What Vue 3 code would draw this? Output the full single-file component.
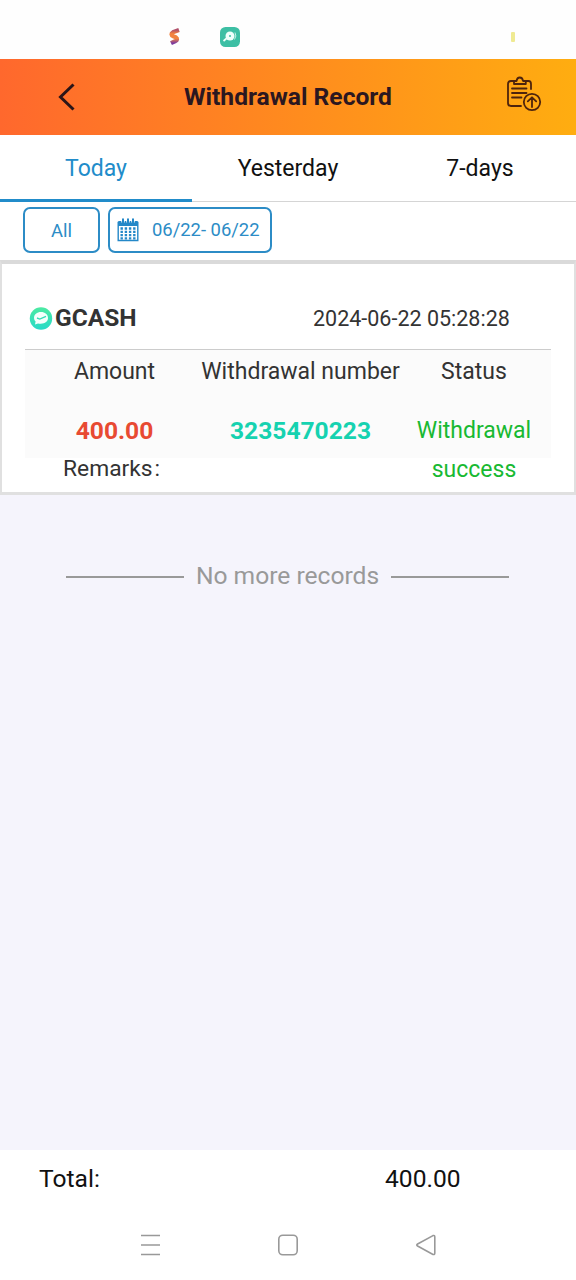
<script setup>
const tabs = ['Today', 'Yesterday', '7-days']
const gridRows = [0, 1, 2, 3]
</script>

<template>
  <main class="screen">
    <div class="statusbar">
      <svg width="576" height="58" viewBox="0 0 576 58">
        <defs>
          <linearGradient id="swirl" x1="0" y1="0" x2="0" y2="1">
            <stop offset="0" stop-color="#b0506a" /><stop offset=".28" stop-color="#f4823d" />
            <stop offset=".65" stop-color="#f0823f" /><stop offset="1" stop-color="#7c3aa0" />
          </linearGradient>
        </defs>
        <path d="M179 30L173 32.200C170.800 33.500 171 35.500 173.200 36.200L176 37.400C177.600 38.500 177.300 40.300 175.500 41L171 43.200" fill="none" stroke="url(#swirl)" stroke-width="4.200" />
        <rect x="220" y="27" width="20" height="20" rx="5.500" fill="#3dbfa4" />
        <circle cx="230" cy="36" r="4.500" fill="#effffb" />
        <path d="M227 38L223.500 41" stroke="#effffb" stroke-width="1.700" fill="none" />
        <path d="M234.500 39.500Q237 36 235 32.500" stroke="#c5f0e6" stroke-width="1" fill="none" />
        <circle cx="230" cy="36" r="1" fill="#3dbfa4" />
        <rect x="511" y="32" width="4" height="10" rx="1" fill="#efea92" />
      </svg>
    </div>
    <header class="header">
      <svg class="back" width="20" height="30" viewBox="0 0 20 30"><path d="M17.500 2.500L4.500 15L17.500 27.500" /></svg>
      <h1>Withdrawal Record</h1>
      <svg class="clip" width="36" height="36" viewBox="0 0 36 36">
        <path d="M8 5H5Q2 5 2 8V27Q2 30 5 30H15M20 5H22.500Q25 5 25 8V13" />
        <path d="M8 8V5H10.500Q11 1.500 13.800 1.500T17 5H19.800V8Z" />
        <path d="M6 12.500H20.500M6 17H20.500M6 21.500H15.500" />
        <circle cx="26" cy="26" r="8.200" />
        <path d="M26 31V21.500M21.800 25.400L26 21.300L30.200 25.400" />
      </svg>
    </header>
    <nav class="tabs">
      <div v-for="(tab, i) in tabs" :key="tab" class="tab" :class="{ active: i === 0 }"><span>{{ tab }}</span></div>
    </nav>
    <div class="filters">
      <button class="all"><span>All</span></button>
      <button class="date">
        <svg width="22" height="24" viewBox="0 0 22 24">
          <path d="M.5 4.500Q.5 3 2 3H20Q21.500 3 21.500 4.500V8H.5Z" fill="#2488c8" />
          <path d="M1.200 8V22.500H20.800V8" fill="none" stroke="#2488c8" stroke-width="1.400" />
          <path d="M6 4.500V2M11 4.500V2M16 4.500V2" stroke="#fff" stroke-width="3.400" />
          <path d="M6 4.500V1.200M11 4.500V1.200M16 4.500V1.200" stroke="#2488c8" stroke-width="2" stroke-linecap="round" />
          <path v-for="r in gridRows" :key="r" :d="`M3.500 ${10.500 + r * 3.300}H18.500`" stroke="#2488c8" stroke-width="2.300" stroke-dasharray="2.400 1.800" />
        </svg>
        <span>06/22- 06/22</span>
      </button>
    </div>
    <article class="card">
      <div class="cardhead">
        <svg width="24" height="24" viewBox="0 0 24 24">
          <defs><linearGradient id="mint" x1="0" y1="0" x2="0" y2="1"><stop stop-color="#4ceaa2" /><stop offset="1" stop-color="#27dac8" /></linearGradient></defs>
          <circle cx="12" cy="12.500" r="11.200" fill="url(#mint)" />
          <path d="M12 6C8 6 5 8.500 5 12Q5 14 6.600 15.500L6 18.500L9 17.400C15 18.500 19 16 19 12C19 8.500 16 6 12 6Z" fill="#f4fffc" />
          <path d="M8 12L10.800 13.100L17 10.300" fill="none" stroke="#35dcb6" stroke-width="1.400" />
        </svg>
        <strong>GCASH</strong>
        <time>2024-06-22 05:28:28</time>
      </div>
      <div class="grid">
        <span class="label">Amount</span><span class="label">Withdrawal number</span><span class="label">Status</span>
        <b class="amount">400.00</b><b class="number">3235470223</b>
        <div class="status"><span>Withdrawal</span><span>success</span></div>
      </div>
      <div class="remarks"><span>Remarks</span><i>:</i></div>
    </article>
    <div class="end"><hr><span>No more records</span><hr></div>
    <footer class="total"><span class="tl">Total:</span><span>400.00</span></footer>
    <div class="navbar">
      <svg width="22" height="22" viewBox="0 0 22 22"><path d="M1 1.500H20M1 11H20M1 20.500H20" /></svg>
      <svg width="22" height="22" viewBox="0 0 22 22"><rect x="1.800" y="1.200" width="18.400" height="19.600" rx="4" /></svg>
      <svg width="22" height="22" viewBox="0 0 22 22"><path d="M18 1.600L2.600 10Q1 11 2.600 12L18 20.400Q19.800 21 19.800 19V3Q19.800 1 18 1.600Z" /></svg>
    </div>
  </main>
</template>

<style>
body { margin: 0; }
</style>
<style scoped>
* { box-sizing: border-box; }
.screen { width: 576px; height: 1280px; display: flex; flex-direction: column; background: #f5f4fc; font-family: Roboto, sans-serif; color: #333; overflow: hidden; white-space: nowrap; }
svg { display: block; flex: none; fill: none; }
.statusbar { height: 59px; background: #fefefe; }
.header { height: 76px; display: grid; grid-template-columns: 96px 1fr 96px; align-items: center; background: linear-gradient(90deg, #ff682d, #ffad10); color: #2b1720; }
.back { margin-left: 56px; margin-top: -1px; stroke: #2b1518; stroke-width: 3; }
.clip { margin-left: 26px; margin-top: -6px; stroke: #4e240d; stroke-width: 1.8; stroke-linecap: round; stroke-linejoin: round; }
h1 { margin: 0; text-align: center; font-size: 24.6px; font-weight: 700; line-height: 30px; }
.tabs { height: 67px; display: grid; grid-template-columns: repeat(3, 1fr); background: #fff; }
.tab { display: flex; align-items: center; justify-content: center; border-bottom: 1px solid #d5d5d5; font-size: 23px; color: #111; padding-top: 1px; }
.tab.active { color: #218cca; border-bottom: 3px solid #218cca; padding-top: 3px; }
.filters { height: 58px; display: flex; gap: 8px; padding: 5px 23px; background: #fff; }
button { height: 46px; border: 2px solid #2c8cc6; border-radius: 7px; background: #fff; color: #2c8cc6; font: 18.4px Roboto, sans-serif; display: flex; align-items: center; padding: 0; }
.all { width: 77px; justify-content: center; }
.all span { padding-top: 1px; }
.date { width: 164px; padding-left: 7px; gap: 13px; }
.date span { margin-top: -2px; }
.card { height: 235px; background: #fff; border: solid #e0e0e0; border-width: 4px 2px 3px; border-top-color: #dadada; padding: 1px 23px 0; }
.cardhead { height: 85px; border-bottom: 1px solid #ccc; display: flex; align-items: center; padding: 21px 0 0 4px; }
.cardhead strong { font-size: 24.5px; margin-left: 2px; width: 258px; }
.cardhead time { font-size: 21.5px; padding-top: 1px; }
.grid { height: 108px; background: #fbfbfb; display: grid; grid-template-columns: 179px 193px 154px; grid-template-rows: 42px 39px; row-gap: 19px; justify-items: center; align-items: center; }
.label { font-size: 23px; }
b { font-size: 24.6px; }
.amount { color: #e84a32; }
.number { color: #16d2b0; }
.status { height: 39px; display: flex; flex-direction: column; align-items: center; font-size: 23px; line-height: 39px; color: #18b932; }
.remarks { height: 24px; display: flex; font-size: 22.8px; line-height: 22px; padding-left: 38px; }
.remarks i { font-style: normal; margin-left: 2px; }
.end { margin-top: 64px; height: 34px; display: flex; align-items: center; padding: 0 67px 0 66px; gap: 11.5px; color: #999; font-size: 24.6px; }
.end span { margin-top: -2px; }
hr { flex: 1; border: 0; margin: 2px 0 0; height: 2px; background: #999; }
.total { margin-top: auto; height: 58px; background: #fff; display: flex; align-items: center; padding: 0 0 2px 39px; color: #111; font-size: 24.6px; }
.tl { width: 346px; }
.navbar { height: 72px; background: #fff; display: flex; gap: 115.5px; justify-content: center; align-items: center; padding-top: 1px; }
.navbar svg { height: 22px; stroke: #999; stroke-width: 1.6; }
</style>
